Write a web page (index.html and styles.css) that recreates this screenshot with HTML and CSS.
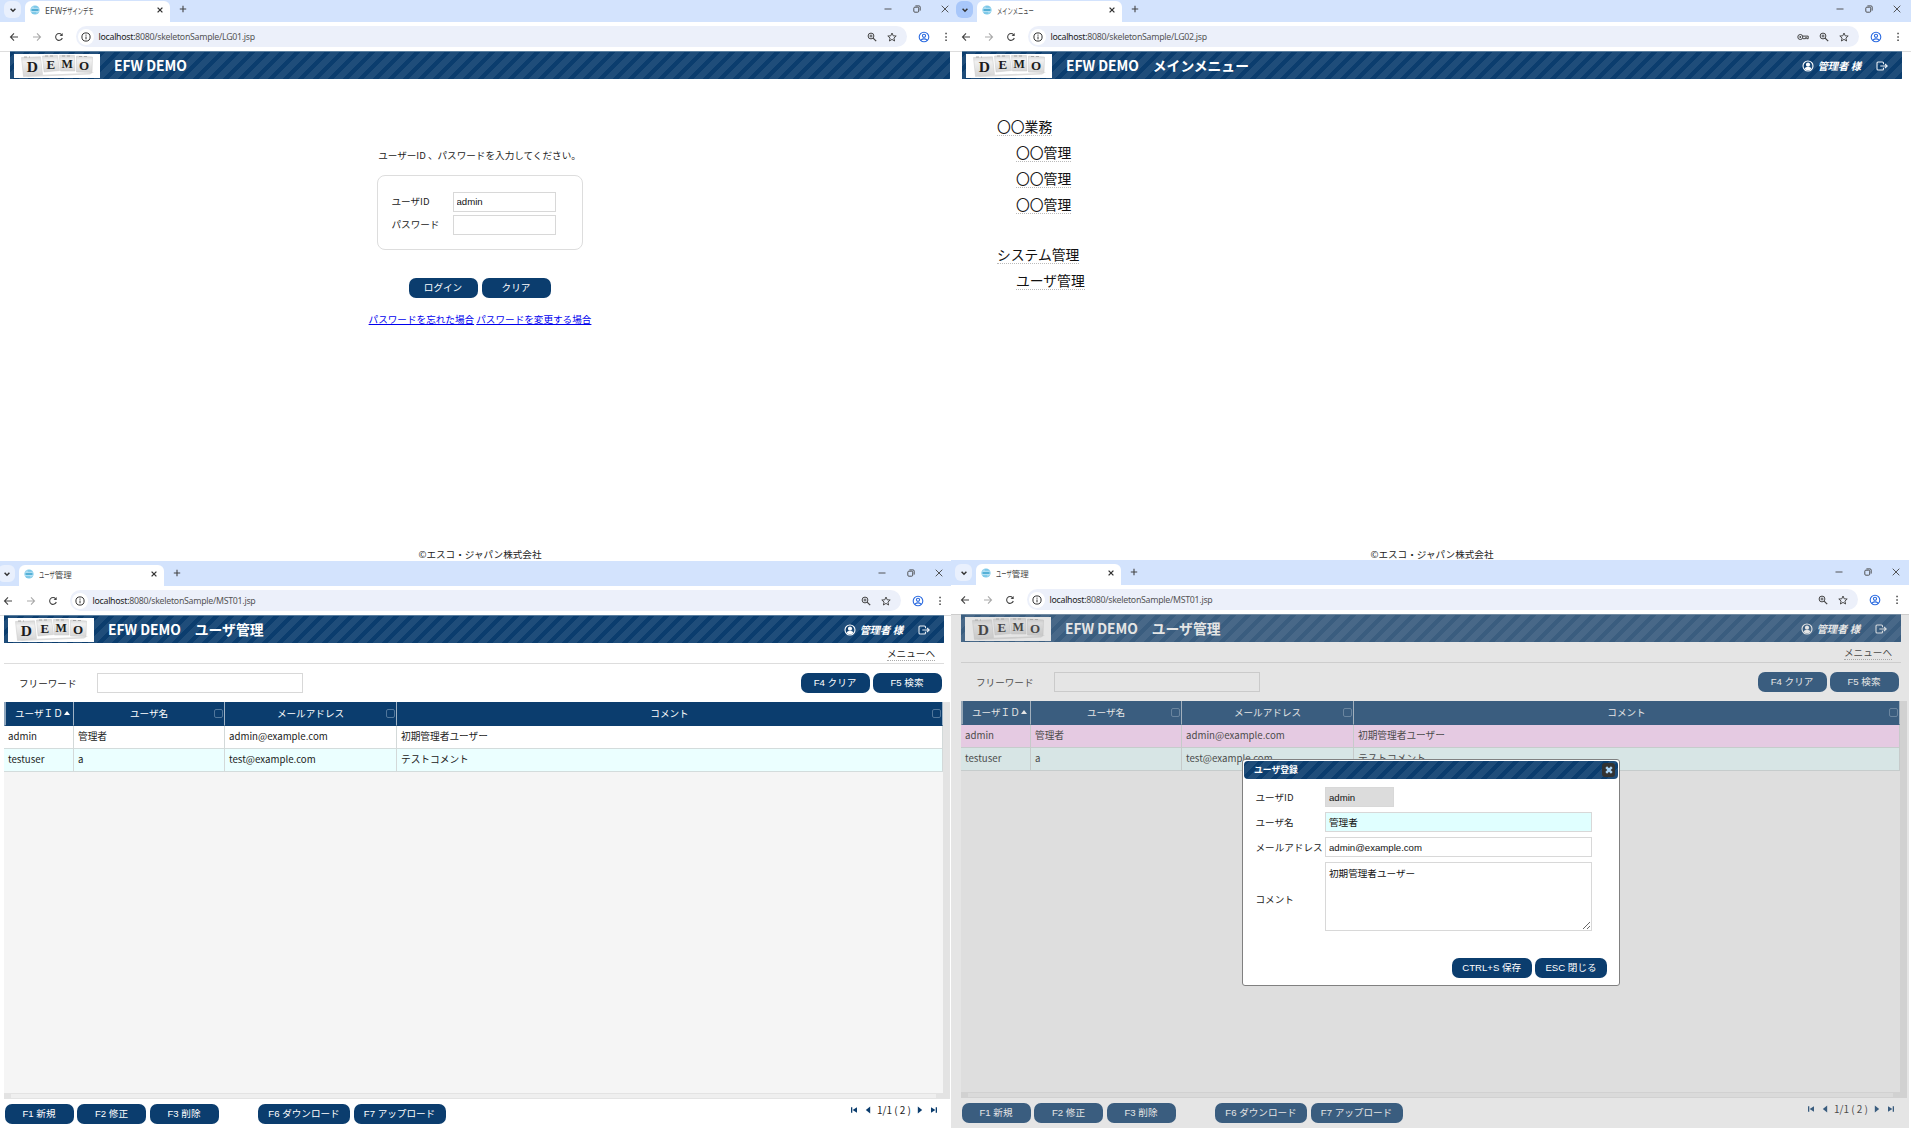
FILE: index.html
```html
<!DOCTYPE html>
<html lang="ja">
<head>
  <meta charset="UTF-8" />
  <title>EFWデザインデモ</title>
  <link rel="stylesheet" href="styles.css">
</head>

<body>
  <!-- アイコン定義 -->
  <svg class="defs" width="0" height="0">
    <symbol id="i-chevron" viewBox="0 0 10 10"><path d="M2.6 3.8 5 6.2 7.4 3.8" fill="none" stroke="#333" stroke-width="1.5"/></symbol>
    <symbol id="i-fav" viewBox="0 0 10 10"><circle cx="5" cy="5" r="4.6" fill="#7cc8e8"/><path d="M1.2 3.3h7.6M.8 6.6h8.4M3 1.4v1.9M7 6.6v2" stroke="#d4eef9" stroke-width=".7"/><path d="M2 5h6" stroke="#3b9fc9" stroke-width="1.2"/></symbol>
    <symbol id="i-close" viewBox="0 0 10 10"><path d="M2.6 2.6 7.4 7.4M7.4 2.6 2.6 7.4" fill="none" stroke="#333" stroke-width="1.3"/></symbol>
    <symbol id="i-plus" viewBox="0 0 10 10"><path d="M5 1.8v6.4M1.8 5h6.4" stroke="#444" stroke-width="1.1"/></symbol>
    <symbol id="i-min" viewBox="0 0 10 10"><path d="M1.5 5h7" stroke="#444" stroke-width=".9"/></symbol>
    <symbol id="i-restore" viewBox="0 0 10 10"><rect x="1.8" y="3.2" width="4.9" height="5" rx="1" fill="none" stroke="#444" stroke-width=".9"/><path d="M3.4 1.9h3.6q1.2 0 1.2 1.2v3.5" fill="none" stroke="#444" stroke-width=".9"/></symbol>
    <symbol id="i-wclose" viewBox="0 0 10 10"><path d="M1.7 1.7l6.6 6.6M8.3 1.7l-6.6 6.6" stroke="#444" stroke-width=".9"/></symbol>
    <symbol id="i-back" viewBox="0 0 10 10"><path d="M9 5H1.6M5 1.4 1.5 5 5 8.6" fill="none" stroke="currentColor" stroke-width="1.1"/></symbol>
    <symbol id="i-reload" viewBox="0 0 10 10"><path d="M8.3 6A3.4 3.4 0 1 1 7.7 2.8" fill="none" stroke="#444" stroke-width="1.1"/><path d="M8.7 1v3.1H5.6z" fill="#444"/></symbol>
    <symbol id="i-info" viewBox="0 0 10 10"><circle cx="5" cy="5" r="4.1" fill="none" stroke="#333" stroke-width="1"/><path d="M5 4.5v2.8M5 2.6v1.1" stroke="#333" stroke-width="1"/></symbol>
    <symbol id="i-zoom" viewBox="0 0 10 10"><circle cx="4" cy="4" r="2.9" fill="none" stroke="#444" stroke-width="1"/><path d="M6.1 6.1 9.2 9.2" stroke="#444" stroke-width="1.2"/><path d="M4 2.5v3M2.5 4h3" stroke="#444" stroke-width=".9"/></symbol>
    <symbol id="i-star" viewBox="0 0 10 10"><path d="M5 1 6.2 3.8l3 .2-2.3 2 .7 3L5 7.4 2.4 9l.7-3L.8 4l3-.2z" fill="none" stroke="#444" stroke-width=".95"/></symbol>
    <symbol id="i-profile" viewBox="0 0 12 12"><circle cx="6" cy="6" r="4.8" fill="none" stroke="#2b6be0" stroke-width="1.1"/><circle cx="6" cy="4.8" r="1.6" fill="none" stroke="#2b6be0" stroke-width="1.1"/><path d="M2.8 9.2q3.2-2.6 6.4 0" fill="none" stroke="#2b6be0" stroke-width="1.1"/></symbol>
    <symbol id="i-dots" viewBox="0 0 10 10"><path d="M4.3 .8h1.5v1.5H4.3zM4.3 4.2h1.5v1.5H4.3zM4.3 7.6h1.5v1.5H4.3z" fill="#444"/></symbol>
    <symbol id="i-key" viewBox="0 0 12 10"><circle cx="3.3" cy="5" r="2.5" fill="none" stroke="#444"/><circle cx="3.3" cy="5" r=".9" fill="#444"/><path d="M5.8 4.1h5.4v2.6H9.7v-1H8.500v1H6" fill="none" stroke="#444" stroke-width="1"/></symbol>
    <symbol id="i-user" viewBox="0 0 12 12"><circle cx="6" cy="6" r="5" fill="none" stroke="#fff" stroke-width="1.1"/><circle cx="6" cy="4.7" r="2.1" fill="#fff"/><path d="M2.6 9q.4-1.900 2.200-1.900h2.400q1.800 0 2.200 1.900-3.400 2.600-6.800 0z" fill="#fff"/></symbol>
    <symbol id="i-logout" viewBox="0 0 12 10"><path d="M7.500 3.200V2q0-1-1-1H2Q1 1 1 2v6q0 1 1 1h4.500q1 0 1-1V6.800" fill="none" stroke="#e8eef4" stroke-width="1.1"/><path d="M4.300 5h6.700M9 3l2.200 2L9 7" fill="none" stroke="#e8eef4" stroke-width="1.1"/></symbol>
    <symbol id="i-first" viewBox="0 0 8 8"><path d="M1 1.200h1.300v5.600H1zM7 1.200v5.600L2.600 4z" fill="#0b3d6e"/></symbol>
    <symbol id="i-prev" viewBox="0 0 8 8"><path d="M6.200.6v6.800L1.800 4z" fill="#0b3d6e"/></symbol>
    <!-- ブロック文字のロゴ -->
    <symbol id="logo" viewBox="0 0 86 24">
      <defs>
        <linearGradient id="cube" x1="0" y1="0" x2="0" y2="1"><stop offset="0" stop-color="#d8d8d8"/><stop offset=".25" stop-color="#f0f0f0"/><stop offset="1" stop-color="#d6d6d6"/></linearGradient>
      </defs>
      <rect width="86" height="24" fill="#fff"/>
      <path d="M10 21.500 74 19l6-1-4 2.500-62 2.500z" fill="#ddd"/>
      <g fill="url(#cube)" stroke="#c8c8c8" stroke-width=".5">
        <path d="M7.500 3.500 26.500 2.800 28.500 20.500 9.500 22.500z"/>
        <path d="M28.500 2 43.500 1.500 45.500 16.500 30 18z"/>
        <path d="M45.500 1.500 60.500 1.500 61 17 46.500 17z"/>
        <path d="M62.500 2 78.500 3 78 18.500 62.500 18z"/>
      </g>
      <path d="M10 3h6M31 2h9M48 2h9M65 2.500h9" stroke="#999" stroke-width=".8" stroke-dasharray="3 2"/>
      <g class="logo-text">
        <text x="12.800" y="18.300" font-size="15.500">D</text>
        <text x="32.600" y="15.200" font-size="13">E</text>
        <text x="47.600" y="14.200" font-size="12">M</text>
        <text x="65" y="15.500" font-size="13">O</text>
      </g>
    </symbol>
  </svg>

  <!-- ログイン画面 -->
  <div class="window w1">
    <div class="frame">
      <div class="tabs">
        <span class="tab-menu"><svg><use href="#i-chevron"/></svg></span>
        <div class="tab"><svg><use href="#i-fav"/></svg><div class="tab-title"><span>EFW</span><span class="kana">デザインデモ</span></div><svg><use href="#i-close"/></svg></div>
        <svg class="plus"><use href="#i-plus"/></svg>
        <div class="controls"><svg><use href="#i-min"/></svg><svg><use href="#i-restore"/></svg><svg><use href="#i-wclose"/></svg></div>
      </div>
      <div class="toolbar">
        <svg><use href="#i-back"/></svg><svg class="forward"><use href="#i-back"/></svg><svg><use href="#i-reload"/></svg>
        <div class="omnibox"><span class="info"><svg><use href="#i-info"/></svg></span><span class="url"><b>localhost:</b>8080/skeletonSample/LG01.jsp</span><svg><use href="#i-zoom"/></svg><svg><use href="#i-star"/></svg></div>
        <svg class="profile"><use href="#i-profile"/></svg><svg class="dots"><use href="#i-dots"/></svg>
      </div>
      <div class="page">
        <div class="banner"><svg class="logo"><use href="#logo"/></svg><h1>EFW DEMO</h1></div>
        <div class="login">
          <p>ユーザーID 、パスワードを入力してください。</p>
          <div class="login-box">
            <label>ユーザID</label><input value="admin">
            <label>パスワード</label><input type="password">
          </div>
          <div class="login-buttons"><button>ログイン</button><button>クリア</button></div>
          <div class="links"><a href="#">パスワードを忘れた場合</a> <a href="#">パスワードを変更する場合</a></div>
        </div>
        <div class="copyright">©エスコ・ジャパン株式会社</div>
      </div>
    </div>
  </div>

  <!-- メインメニュー -->
  <div class="window w2">
    <div class="frame">
      <div class="tabs">
        <span class="tab-menu active"><svg><use href="#i-chevron"/></svg></span>
        <div class="tab"><svg><use href="#i-fav"/></svg><div class="tab-title"><span class="kana">メインメニュー</span></div><svg><use href="#i-close"/></svg></div>
        <svg class="plus"><use href="#i-plus"/></svg>
        <div class="controls"><svg><use href="#i-min"/></svg><svg><use href="#i-restore"/></svg><svg><use href="#i-wclose"/></svg></div>
      </div>
      <div class="toolbar">
        <svg><use href="#i-back"/></svg><svg class="forward"><use href="#i-back"/></svg><svg><use href="#i-reload"/></svg>
        <div class="omnibox"><span class="info"><svg><use href="#i-info"/></svg></span><span class="url"><b>localhost:</b>8080/skeletonSample/LG02.jsp</span><svg class="key"><use href="#i-key"/></svg><svg><use href="#i-zoom"/></svg><svg><use href="#i-star"/></svg></div>
        <svg class="profile"><use href="#i-profile"/></svg><svg class="dots"><use href="#i-dots"/></svg>
      </div>
      <div class="page">
        <div class="banner"><svg class="logo"><use href="#logo"/></svg><h1>EFW DEMO　メインメニュー</h1><svg class="user"><use href="#i-user"/></svg><i>管理者 様</i><svg class="logout"><use href="#i-logout"/></svg></div>
        <div class="menu">
          <div><span>〇〇業務</span></div>
          <div class="sub"><span>〇〇管理</span></div>
          <div class="sub"><span>〇〇管理</span></div>
          <div class="sub"><span>〇〇管理</span></div>
          <div class="next"><span>システム管理</span></div>
          <div class="sub"><span>ユーザ管理</span></div>
        </div>
        <div class="copyright">©エスコ・ジャパン株式会社</div>
      </div>
    </div>
  </div>

  <!-- ユーザ管理 一覧 -->
  <div class="window w3">
    <div class="frame">
      <div class="tabs">
        <span class="tab-menu"><svg><use href="#i-chevron"/></svg></span>
        <div class="tab"><svg><use href="#i-fav"/></svg><div class="tab-title"><span class="kana short">ユーザ</span><span>管理</span></div><svg><use href="#i-close"/></svg></div>
        <svg class="plus"><use href="#i-plus"/></svg>
        <div class="controls"><svg><use href="#i-min"/></svg><svg><use href="#i-restore"/></svg><svg><use href="#i-wclose"/></svg></div>
      </div>
      <div class="toolbar">
        <svg><use href="#i-back"/></svg><svg class="forward"><use href="#i-back"/></svg><svg><use href="#i-reload"/></svg>
        <div class="omnibox"><span class="info"><svg><use href="#i-info"/></svg></span><span class="url"><b>localhost:</b>8080/skeletonSample/MST01.jsp</span><svg><use href="#i-zoom"/></svg><svg><use href="#i-star"/></svg></div>
        <svg class="profile"><use href="#i-profile"/></svg><svg class="dots"><use href="#i-dots"/></svg>
      </div>
      <div class="page">
        <div class="banner"><svg class="logo"><use href="#logo"/></svg><h1>EFW DEMO　ユーザ管理</h1><svg class="user"><use href="#i-user"/></svg><i>管理者 様</i><svg class="logout"><use href="#i-logout"/></svg></div>
        <div class="to-menu"><span>メニューへ</span></div>
        <div class="search"><label>フリーワード</label><input><button>F4 クリア</button><button>F5 検索</button></div>
        <div class="list">
          <div class="grid">
            <div class="row head"><div class="id">ユーザＩＤ<b></b></div><div>ユーザ名<u></u></div><div>メールアドレス<u></u></div><div>コメント<u></u></div></div>
            <div class="row"><div>admin</div><div>管理者</div><div>admin@example.com</div><div>初期管理者ユーザー</div></div>
            <div class="row even"><div>testuser</div><div>a</div><div>test@example.com</div><div>テストコメント</div></div>
          </div>
          <div class="vbar"></div>
          <div class="hbar"><span></span></div>
        </div>
        <div class="actions">
          <button>F1 新規</button><button>F2 修正</button><button>F3 削除</button>
          <button class="wide first">F6 ダウンロード</button><button class="wide">F7 アップロード</button>
          <div class="pager"><svg><use href="#i-first"/></svg><svg><use href="#i-prev"/></svg><span>1/1 ( 2 )</span><svg class="flip"><use href="#i-prev"/></svg><svg class="flip"><use href="#i-first"/></svg></div>
        </div>
      </div>
    </div>
  </div>

  <!-- ユーザ管理 登録ダイアログ -->
  <div class="window w4">
    <div class="frame">
      <div class="tabs">
        <span class="tab-menu"><svg><use href="#i-chevron"/></svg></span>
        <div class="tab"><svg><use href="#i-fav"/></svg><div class="tab-title"><span class="kana short">ユーザ</span><span>管理</span></div><svg><use href="#i-close"/></svg></div>
        <svg class="plus"><use href="#i-plus"/></svg>
        <div class="controls"><svg><use href="#i-min"/></svg><svg><use href="#i-restore"/></svg><svg><use href="#i-wclose"/></svg></div>
      </div>
      <div class="toolbar">
        <svg><use href="#i-back"/></svg><svg class="forward"><use href="#i-back"/></svg><svg><use href="#i-reload"/></svg>
        <div class="omnibox"><span class="info"><svg><use href="#i-info"/></svg></span><span class="url"><b>localhost:</b>8080/skeletonSample/MST01.jsp</span><svg><use href="#i-zoom"/></svg><svg><use href="#i-star"/></svg></div>
        <svg class="profile"><use href="#i-profile"/></svg><svg class="dots"><use href="#i-dots"/></svg>
      </div>
      <div class="page">
        <div class="banner"><svg class="logo"><use href="#logo"/></svg><h1>EFW DEMO　ユーザ管理</h1><svg class="user"><use href="#i-user"/></svg><i>管理者 様</i><svg class="logout"><use href="#i-logout"/></svg></div>
        <div class="to-menu"><span>メニューへ</span></div>
        <div class="search"><label>フリーワード</label><input><button>F4 クリア</button><button>F5 検索</button></div>
        <div class="list">
          <div class="grid">
            <div class="row head"><div class="id">ユーザＩＤ<b></b></div><div>ユーザ名<u></u></div><div>メールアドレス<u></u></div><div>コメント<u></u></div></div>
            <div class="row selected"><div>admin</div><div>管理者</div><div>admin@example.com</div><div>初期管理者ユーザー</div></div>
            <div class="row even"><div>testuser</div><div>a</div><div>test@example.com</div><div>テストコメント</div></div>
          </div>
          <div class="vbar"></div>
          <div class="hbar"><span></span></div>
        </div>
        <div class="actions">
          <button>F1 新規</button><button>F2 修正</button><button>F3 削除</button>
          <button class="wide first">F6 ダウンロード</button><button class="wide">F7 アップロード</button>
          <div class="pager"><svg><use href="#i-first"/></svg><svg><use href="#i-prev"/></svg><span>1/1 ( 2 )</span><svg class="flip"><use href="#i-prev"/></svg><svg class="flip"><use href="#i-first"/></svg></div>
        </div>
        <div class="overlay"></div>
      </div>
    </div>

    <div class="dialog">
      <div class="dialog-title"><span>ユーザ登録</span><button class="dialog-close"><svg viewBox="0 0 8 8"><path d="M1.200 1.200l5.600 5.600M6.800 1.200l-5.600 5.600" stroke="#a9d3f5" stroke-width="2.400"/></svg></button></div>
      <div class="form">
        <label>ユーザID</label><input class="readonly" value="admin" readonly>
        <label>ユーザ名</label><input class="focus" value="管理者">
        <label>メールアドレス</label><input value="admin@example.com">
        <label class="comment">コメント</label><textarea>初期管理者ユーザー</textarea>
      </div>
      <div class="dialog-buttons"><button class="save">CTRL+S 保存</button><button class="esc">ESC 閉じる</button></div>
    </div>
  </div>
</body>
</html>
```
FILE: styles.css
```css
* {
  box-sizing: border-box;
}

body {
  margin: 0;
  height: 1137px;
  position: relative;
  overflow: hidden;
  background-color: #ffffff;
  color: #222;
  font-family: "Noto Sans CJK JP", sans-serif;
  font-size: 9.6px;
  line-height: 14px;
}

.defs {
  position: absolute;
}

svg {
  width: 10px;
  height: 10px;
  flex: none;
  display: block;
}

/* Windows */
.window {
  position: absolute;
  overflow: hidden;
}

.w1 { left: 0; top: 0; width: 952px; height: 561px; }
.w2 { left: 952px; top: 0; width: 959px; height: 561px; }
.w3 { left: 0; top: 561px; width: 951px; height: 576px; }
.w4 { left: 951px; top: 560px; width: 958px; height: 568px; }

.frame {
  width: 959px;
  height: 100%;
  display: flex;
  flex-direction: column;
}

.w3 .frame {
  margin-left: -6px;
}

/* Browser tabs */
.tabs {
  height: 22px;
  flex: none;
  display: flex;
  align-items: flex-end;
  background-color: #d3e3fd;
  padding-left: 4px;
}

.w3 .tabs,
.w4 .tabs {
  height: 25px;
}

.tab-menu {
  width: 17px;
  height: 17px;
  margin: 0 4px 4px 0;
  border-radius: 6px;
  background-color: #e9f0fd;
  display: flex;
  align-items: center;
  justify-content: center;
}

.tab-menu.active {
  background-color: #a8c7fa;
}

.tab {
  width: 145px;
  height: 21px;
  padding: 0 5px 4px;
  border-radius: 6px 6px 0 0;
  background-color: #fff;
  display: flex;
  align-items: center;
}

.tab-title {
  flex: 1;
  display: flex;
  margin-left: 5px;
  font-size: 8.5px;
  color: #444;
  white-space: nowrap;
}

/* half-width look of the tab font */
.kana {
  transform: scaleX(0.62);
  transform-origin: 0 50%;
}

.kana.short {
  margin-right: -9.500px;
}

.plus {
  margin: 0 0 8px 8px;
}

.controls {
  display: flex;
  gap: 18.500px;
  margin: 0 9px 8px auto;
}

/* Address bar */
.toolbar {
  height: 29px;
  flex: none;
  display: flex;
  align-items: center;
  padding-left: 9px;
  color: #444;
  background-color: #fff;
}

.toolbar > svg {
  margin-right: 12.500px;
}

.toolbar > .forward {
  color: #aaa;
  transform: scaleX(-1);
}

.omnibox {
  width: 831px;
  height: 21px;
  margin-left: -.5px;
  padding: 0 10px 0 2px;
  border-radius: 11px;
  background-color: #ecf0fa;
  display: flex;
  align-items: center;
  gap: 10px;
}

.info {
  width: 16px;
  height: 16px;
  border-radius: 50%;
  background-color: #fff;
  display: flex;
  align-items: center;
  justify-content: center;
}

.url {
  flex: 1;
  margin-left: -5.500px;
  font-family: "Noto Sans", sans-serif;
  font-size: 8.8px;
  letter-spacing: -.28px;
  color: #555;
}

.url b {
  font-weight: normal;
  color: #222;
}

.key {
  width: 12px;
  height: 10px;
}

.toolbar > .profile {
  width: 12px;
  height: 12px;
  margin: 0 11px 0 10.500px;
}

.toolbar > .dots {
  margin: 0;
}

/* Page */
.page {
  flex: 1;
  position: relative;
  border-top: 1px solid #ddd;
  background-color: #fff;
  display: flex;
  flex-direction: column;
}

.banner {
  height: 28px;
  flex: none;
  margin: -1px 9px 0 10px;
  padding: 0 14px 0 4px;
  color: #fff;
  display: flex;
  align-items: center;
  border-top: 1px solid #5b7f9f;
  background: repeating-linear-gradient(135deg, #0b3d6e 0 4.200px, #1f4d7a 4.200px 10.600px);
}

.logo {
  width: 86px;
  height: 24px;
}

.logo-text {
  font-family: "Liberation Serif", serif;
  font-weight: bold;
  fill: #1c1c1c;
}

.banner h1 {
  flex: 1;
  margin: 0 0 1px 14px;
  font-size: 13.8px;
  line-height: 20px;
}

.banner .user {
  width: 12px;
  height: 12px;
}

.banner i {
  font-size: 10.3px;
  font-weight: bold;
  margin: 0 15px 0 3px;
}

.banner .logout {
  width: 12px;
  height: 10px;
}

button {
  width: 69px;
  height: 20px;
  padding: 0;
  border: 0;
  border-radius: 7px;
  background-color: #0b3d6e;
  color: #fff;
  font-family: "Liberation Sans", "Noto Sans CJK JP", sans-serif;
  font-size: 9.6px;
  line-height: 20px;
}

input,
textarea {
  height: 20px;
  padding: 0 3px;
  border: 1px solid #d8d8d8;
  border-radius: 0;
  outline: none;
  background-color: #fff;
  color: #111;
  font-family: "Liberation Sans", "Noto Sans CJK JP", sans-serif;
  font-size: 9.6px;
}

/* Login */
.login {
  flex: 1;
  padding-top: 68.500px;
  display: flex;
  flex-direction: column;
  align-items: center;
}

.login p {
  margin: 0;
}

.login-box {
  width: 206px;
  height: 75px;
  margin-top: 13px;
  padding: 16px 14px;
  border: 1px solid #ddd;
  border-radius: 8px;
  display: grid;
  grid-template-columns: 61px 103px;
  row-gap: 3px;
  align-content: start;
  align-items: center;
}

.login-box label {
  margin-top: -1.500px;
}

.login-buttons {
  margin-top: 28px;
  display: flex;
  gap: 4px;
}

.links {
  margin: 14px 0 0 1px;
}

.links a {
  color: #0000ee;
}

.copyright {
  text-align: center;
  height: 14px;
  margin: 0 0 .5px 1px;
}

/* Main menu */
.menu {
  flex: 1;
  padding: 33.500px 0 0 45px;
  font-size: 13.8px;
  line-height: 26px;
  color: #111;
}

.menu span {
  display: inline-block;
  line-height: 17px;
  border-bottom: 1px dotted #bbb;
}

.menu .sub {
  margin-left: 19px;
}

.menu .next {
  margin-top: 24px;
}

/* User list */
.to-menu {
  height: 20.500px;
  flex: none;
  margin: 0 9px 0 10px;
  padding: 3px 9px 0 0;
  border-bottom: 1px solid #ddd;
  text-align: right;
}

.to-menu span {
  display: inline-block;
  line-height: 13px;
  border-bottom: 1px dotted #aaa;
}

.search {
  height: 38px;
  flex: none;
  padding: 1.500px 11.500px 0 25px;
  display: flex;
  align-items: center;
  gap: 3px;
}

.search label {
  width: 75px;
}

.search input {
  width: 206px;
  margin-right: auto;
}

.list {
  height: 397px;
  flex: none;
  margin: 0 3px 0 10px;
  display: grid;
  grid-template-columns: 939px 7px;
  grid-template-rows: 391px 6px;
}

.grid {
  background-color: #f5f5f5;
}

.row {
  height: 23px;
  display: grid;
  grid-template-columns: 70px 151px 172px 1fr;
  background-color: #fff;
  line-height: 23px;
  font-size: 9.7px;
}

.row > div {
  padding-left: 4px;
  border-right: 1px solid #d3d9d9;
  border-bottom: 1px solid #d3dcdc;
}

.row.head > div {
  position: relative;
  padding: 0;
  background-color: #0b3d6e;
  border-right-color: #9fb3c6;
  border-bottom-color: #0b3d6e;
  color: #fff;
  font-size: 9.6px;
  text-align: center;
}

.row.head .id {
  border-left: 2px solid #8fa6bd;
  padding-left: 9px;
  text-align: left;
}

.row.head b {
  display: inline-block;
  margin: 0 0 2px 1px;
  border: 3px solid transparent;
  border-top: 0;
  border-bottom: 4px solid #fff;
}

.row.head u {
  position: absolute;
  top: 7px;
  right: 1.500px;
  width: 9px;
  height: 9px;
  border: 1px solid #50769b;
  border-radius: 2px;
}

.row.even {
  background-color: #ebffff;
}

.row.selected {
  background-color: #ffd9fb;
}

.vbar {
  background-color: #e3e3e3;
  grid-row: span 2;
}

.hbar {
  background-color: #e3e3e3;
  padding: 1px 7px;
}

.hbar span {
  display: block;
  height: 4px;
  background-color: #efefef;
}

.actions {
  padding: 5.500px 15px 0 10.500px;
  display: flex;
  gap: 3.500px;
}

.actions .wide {
  width: 92px;
}

.actions .first {
  margin-left: 36px;
}

.pager {
  margin-left: auto;
  height: 12.500px;
  display: flex;
  align-items: center;
  gap: 6px;
  font-size: 10px;
}

.pager svg {
  width: 8px;
  height: 8px;
}

.pager span {
  margin: 0 -1px;
}

.flip {
  transform: scaleX(-1);
}

.overlay {
  position: absolute;
  inset: -1px 0 0 0;
  background-color: rgba(170, 170, 170, 0.3);
}

/* Dialog */
.dialog {
  position: absolute;
  left: 291px;
  top: 199px;
  width: 378px;
  height: 227px;
  padding: 1px;
  border: 1px solid #808080;
  border-radius: 3px;
  background-color: #fff;
}

.dialog-title {
  height: 18px;
  padding: 0 3px 0 10px;
  border-radius: 4px;
  background: repeating-linear-gradient(135deg, #0b3d6e 0 4.200px, #1f4d7a 4.200px 10.600px);
  color: #fff;
  font-size: 8.8px;
  font-weight: bold;
  display: flex;
  align-items: center;
  justify-content: space-between;
}

.dialog-close {
  width: 13px;
  height: 14px;
  border-radius: 3px;
  background-color: #333;
}

.dialog-close svg {
  width: 8px;
  height: 8px;
  margin: 0 auto;
}

.form {
  padding: 8px 0 0 11.500px;
  display: grid;
  grid-template-columns: 69.500px 267px;
  row-gap: 5px;
  align-items: center;
}

.form label {
  white-space: nowrap;
}

.form .comment {
  padding-top: 5px;
}

.form .readonly {
  width: 69px;
  background-color: #dcdcdc;
}

.form .focus {
  background-color: #e0ffff;
}

.form textarea {
  height: 69px;
  padding-top: 4px;
  line-height: 14px;
  overflow: hidden;
}

.dialog-buttons {
  display: flex;
  gap: 3.500px;
  justify-content: flex-end;
  margin: 27px 11px 0 0;
}

.save {
  width: 79.500px;
}

.esc {
  width: 72px;
}
```
